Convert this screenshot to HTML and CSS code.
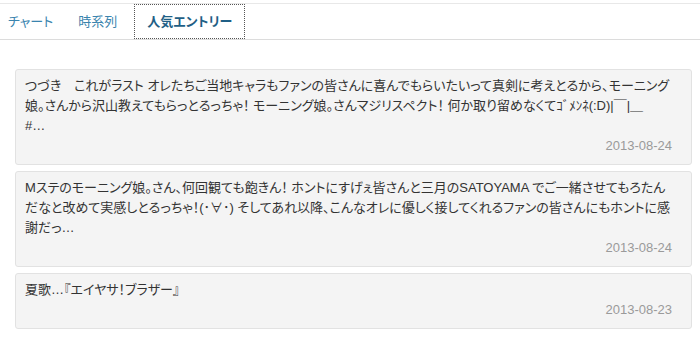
FILE: index.html
```html
<!DOCTYPE html>
<html lang="ja">
<head>
<meta charset="utf-8">
<link rel="stylesheet" href="styles.css">
</head>
<body>
<nav class="tabs">
  <a class="tab tab-first">チャート</a>
  <a class="tab">時系列</a>
  <a class="tab tab-active">人気エントリー</a>
</nav>
<main class="entries">
  <article class="card">
    <p class="card-text">つづき　これがラスト オレたちご当地キャラもファンの皆さんに喜んでもらいたいって真剣に考えとるから、モーニング娘。さんから沢山教えてもらっとるっちゃ！ モーニング娘。さんマジリスペクト！ 何か取り留めなくてｺﾞﾒﾝﾈ(:D)|￣|＿<br>#…</p>
    <p class="card-date">2013-08-24</p>
  </article>
  <article class="card">
    <p class="card-text">Mステのモーニング娘。さん、何回観ても飽きん！ ホントにすげぇ皆さんと三月のSATOYAMA でご一緒させてもろたん<br>だなと改めて実感しとるっちゃ！(･∀･) そしてあれ以降、こんなオレに優しく接してくれるファンの皆さんにもホントに感謝だっ…</p>
    <p class="card-date">2013-08-24</p>
  </article>
  <article class="card">
    <p class="card-text">夏歌…『エイヤサ！ブラザー』</p>
    <p class="card-date">2013-08-23</p>
  </article>
</main>
</body>
</html>
```
FILE: styles.css
```css
html, body {
  margin: 0;
  padding: 0;
  background: #fff;
}
body {
  font-family: "Liberation Sans", "Noto Sans CJK JP", sans-serif;
  color: #333;
}
.tabs {
  display: flex;
  margin-top: 3px;
  border-top: 1px solid #e8e8e8;
  border-bottom: 1px solid #dcdcdc;
  height: 35px;
}
.tab {
  display: block;
  padding: 0 12px;
  margin-right: 1px;
  line-height: 35px;
  font-size: 13px;
  color: #3a84ae;
  font-feature-settings: "palt";
}
.tab-first {
  padding-left: 8px;
}
.tab-active {
  box-sizing: border-box;
  height: 35px;
  margin-left: 4px;
  line-height: 33px;
  border: 1px dotted #555;
  background: #fff;
  color: #1f5f86;
  font-weight: bold;
}
.entries {
  padding: 29px 8px 0 15px;
}
.card {
  background: #f4f4f4;
  border: 1px solid #e2e2e2;
  border-radius: 3px;
  padding: 6px 8px 8px 9px;
  margin-bottom: 6px;
}
.card-text {
  margin: 0;
  font-size: 13px;
  line-height: 20px;
  color: #333;
  font-feature-settings: "palt";
}
.card-date {
  margin: 0;
  padding-right: 11px;
  text-align: right;
  font-size: 13px;
  line-height: 20px;
  color: #9a9a9a;
}
```
